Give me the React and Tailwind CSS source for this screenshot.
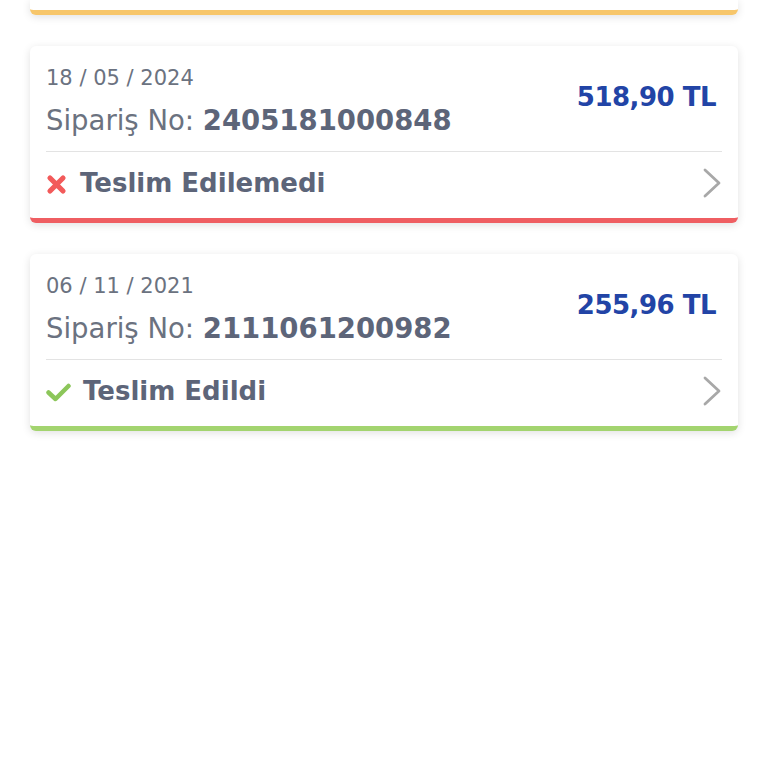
import React from "react";

const orders = [
  { date: "18 / 05 / 2024", no: "2405181000848", price: "518,90 TL", status: "Teslim Edilemedi", ok: false },
  { date: "06 / 11 / 2021", no: "2111061200982", price: "255,96 TL", status: "Teslim Edildi", ok: true },
];

function XIcon() {
  return (
    <svg width="21" height="21" viewBox="0 0 21 21" className="mt-[2px]">
      <path d="M4 4 L17 17 M17 4 L4 17" fill="none" stroke="#f25a5a" strokeWidth="5.2" strokeLinecap="round" />
    </svg>
  );
}

function CheckIcon() {
  return (
    <svg width="25" height="19" viewBox="0 0 25 19" className="mt-[3px]">
      <path d="M2.5 9.5 L9.5 16 L22.5 3" fill="none" stroke="#8cc65a" strokeWidth="4.5" strokeLinejoin="round" strokeLinecap="round" />
    </svg>
  );
}

function Chevron() {
  return (
    <svg width="20" height="30" viewBox="0 0 20 30">
      <path d="M3 2 L17 15 L3 28" fill="none" stroke="#a8a8a8" strokeWidth="2.8" strokeLinecap="round" strokeLinejoin="round" />
    </svg>
  );
}

function Card({ o }) {
  return (
    <div
      className={`bg-white rounded-md shadow-[0_2px_8px_rgba(0,0,0,0.12)] border-b-[5px] ${o.ok ? "border-[#a3d46f]" : "border-[#ef5e62]"}`}
    >
      <div className="flex items-center justify-between pl-4 pr-[22px] pt-[18px] pb-[11px]">
        <div>
          <div className="text-[21px] leading-[28px] text-[#6b7280]">{o.date}</div>
          <div className="mt-[8px] text-[27.5px] leading-[40px] text-[#6b7280]">
            Sipariş No: <span className="font-bold text-[#5d6579]">{o.no}</span>
          </div>
        </div>
        <div className="text-[26px] tracking-[-0.5px] font-bold text-[#2244a6] -mt-[10px]">{o.price}</div>
      </div>
      <div className="mx-4 h-px bg-[#e3e3e3]" />
      <div className="flex items-center justify-between h-[62px] mx-4 mb-[4px]">
        <div className={`flex items-center ${o.ok ? "gap-[12px]" : "gap-[13px]"}`}>
          {o.ok ? <CheckIcon /> : <XIcon />}
          <span className="text-[26px] font-bold text-[#5d6579]">{o.status}</span>
        </div>
        <Chevron />
      </div>
    </div>
  );
}

export default function App() {
  return (
    <div className="min-h-[768px] bg-white px-[30px] flex flex-col gap-[31px]" style={{ fontFamily: '"DejaVu Sans", sans-serif' }}>
      <div className="h-[15px] bg-white rounded-b-md shadow-[0_2px_8px_rgba(0,0,0,0.12)] border-b-[5px] border-[#f7c66a]" />
      {orders.map((o) => (
        <Card key={o.no} o={o} />
      ))}
    </div>
  );
}
